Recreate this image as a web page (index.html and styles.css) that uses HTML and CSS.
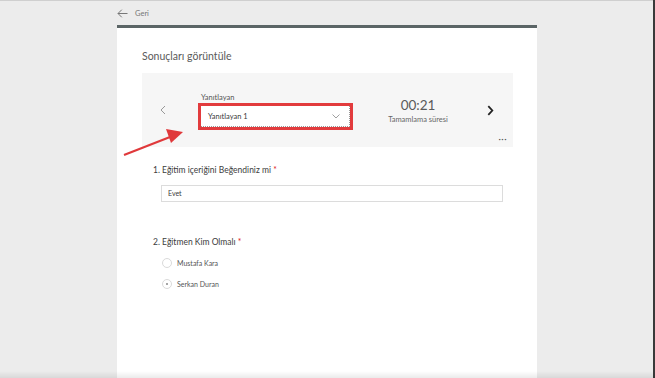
FILE: index.html
```html
<!DOCTYPE html>
<html lang="tr">
<head>
    <meta charset="UTF-8">
    <meta name="viewport" content="width=device-width, initial-scale=1.0">
    <title>Sonuçları görüntüle</title>
    <link rel="stylesheet" href="styles.css">
</head>
<body>
    <div class="topbar">
        <a class="back" href="#">
            <svg width="11" height="9" viewBox="0 0 11 9"><path d="M10.5 4.5H1M4.8 0.7L1 4.5l3.8 3.8" fill="none" stroke="#777" stroke-width="1"/></svg>
            <span>Geri</span>
        </a>
    </div>

    <div class="card">
        <h1>Sonuçları görüntüle</h1>

        <div class="panel">
            <button class="nav prev">
                <svg width="6" height="10" viewBox="0 0 6 10"><path d="M5 1L1 5l4 4" fill="none" stroke="#999" stroke-width="1"/></svg>
            </button>
            <div class="responder">
                <div class="responder-label">Yanıtlayan</div>
                <div class="select">
                    <div class="select-inner">
                        <span>Yanıtlayan 1</span>
                        <svg width="8" height="5" viewBox="0 0 8 5"><path d="M0.5 0.5L4 4l3.5-3.5" fill="none" stroke="#888" stroke-width="0.8"/></svg>
                    </div>
                </div>
            </div>
            <div class="time">
                <div class="time-value">00:21</div>
                <div class="time-label">Tamamlama süresi</div>
            </div>
            <button class="nav next">
                <svg width="7" height="11" viewBox="0 0 7 11"><path d="M1.3 1.2l4 4.3-4 4.3" fill="none" stroke="#222" stroke-width="1.8"/></svg>
            </button>
            <div class="more">···</div>
        </div>

        <div class="question">
            <div class="question-title">1. Eğitim içeriğini Beğendiniz mi <span class="req">*</span></div>
            <div class="answer-box">Evet</div>
        </div>

        <div class="question second">
            <div class="question-title">2. Eğitmen Kim Olmalı <span class="req">*</span></div>
            <div class="radio-row"><span class="radio"></span>Mustafa Kara</div>
            <div class="radio-row"><span class="radio checked"></span>Serkan Duran</div>
        </div>
    </div>

    <svg class="annotation" width="655" height="378" viewBox="0 0 655 378">
        <line x1="124" y1="154" x2="170" y2="136" stroke="#e0393b" stroke-width="2.2"/>
        <polygon points="183,131 166,128 171,142" fill="#e0393b"/>
    </svg>
</body>
</html>
```

FILE: styles.css
```css
html, body {
    margin: 0;
    height: 378px;
    overflow: hidden;
}

html {
    border-right: 2px solid #3a3a3a;
}

body {
    font-family: 'Lato', 'Open Sans', sans-serif;
    background-color: #ececec;
    color: #444;
    display: flex;
    flex-direction: column;
    border-top: 1px solid #cfcfcf;
    box-sizing: border-box;
    position: relative;
}

body::after {
    content: '';
    position: fixed;
    left: 0;
    right: 0;
    bottom: 0;
    height: 7px;
    background: linear-gradient(rgba(0, 0, 0, 0), rgba(0, 0, 0, 0.08));
}

.topbar {
    height: 24px;
    padding-left: 117px;
    display: flex;
    align-items: center;
}

.back {
    display: flex;
    align-items: center;
    gap: 7px;
    text-decoration: none;
    color: #777;
    font-size: 7.5px;
}

.card {
    margin-left: 117px;
    width: 420px;
    flex: 1;
    background-color: #ffffff;
    border-top: 3px solid #5b6566;
    padding: 20px 25px 0;
    box-sizing: border-box;
}

h1 {
    margin: 0;
    font-size: 10.5px;
    line-height: 16px;
    font-weight: 400;
    color: #5a5a5a;
}

.panel {
    position: relative;
    margin-top: 9px;
    width: 371px;
    height: 74px;
    background-color: #f6f6f6;
    display: flex;
    align-items: center;
}

.nav {
    background: none;
    border: none;
    padding: 0;
    display: flex;
    align-items: center;
}

.prev {
    width: 56px;
    padding-left: 18px;
    padding-bottom: 1px;
}

.responder {
    width: 155px;
    margin-top: 3px;
}

.responder-label {
    font-size: 7.5px;
    line-height: 10px;
    color: #555;
    padding-left: 3px;
}

.select {
    height: 27px;
    border: 3px solid #e23b3d;
    box-sizing: border-box;
    background: #fff;
}

.select-inner {
    height: 100%;
    box-sizing: border-box;
    border-right: 1px dotted #999;
    border-bottom: 1px dotted #999;
    display: flex;
    align-items: center;
    justify-content: space-between;
    padding: 0 9px 0 7px;
    font-size: 7.5px;
    color: #3a3a3a;
}

.time {
    width: 130px;
    text-align: center;
}

.time-value {
    font-size: 13.5px;
    line-height: 18px;
    color: #5a5a5a;
}

.time-label {
    font-size: 7.5px;
    line-height: 10px;
    color: #666;
    margin-top: 1px;
}

.next {
    margin-left: 4px;
}

.more {
    position: absolute;
    right: 6px;
    bottom: 3px;
    font-size: 9px;
    line-height: 10px;
    color: #555;
    letter-spacing: 0.5px;
}

.question {
    margin-top: 16px;
    padding-left: 11px;
}

.question.second {
    margin-top: 33px;
}

.question-title {
    font-size: 8.5px;
    line-height: 14px;
    color: #3c3c3c;
}

.req {
    color: #d22;
}

.answer-box {
    margin: 8px 0 0 8px;
    width: 342px;
    height: 17px;
    box-sizing: border-box;
    border: 1px solid #dcdcdc;
    font-size: 7px;
    line-height: 15px;
    padding-left: 6px;
    color: #3a3a3a;
}

.radio-row {
    display: flex;
    align-items: center;
    height: 14px;
    margin: 7px 0 0 9px;
    font-size: 7px;
    color: #555;
}

.radio-row + .radio-row {
    margin-top: 7px;
}

.radio {
    width: 8px;
    height: 8px;
    border: 1px solid #dadada;
    border-radius: 50%;
    margin-right: 5px;
    display: flex;
    align-items: center;
    justify-content: center;
}

.radio.checked::after {
    content: '';
    width: 2px;
    height: 2px;
    border-radius: 50%;
    background: #888;
}

.annotation {
    position: absolute;
    left: 0;
    top: 0;
    pointer-events: none;
}
```
